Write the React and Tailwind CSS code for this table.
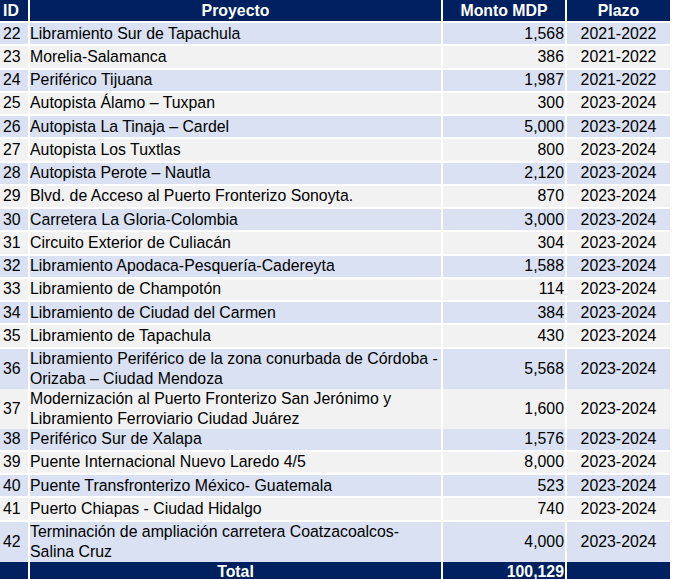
const ROWS = [
  { id: 22, name: ['Libramiento Sur de Tapachula'], monto: '1,568', plazo: '2021-2022' },
  { id: 23, name: ['Morelia-Salamanca'], monto: '386', plazo: '2021-2022' },
  { id: 24, name: ['Periférico Tijuana'], monto: '1,987', plazo: '2021-2022' },
  { id: 25, name: ['Autopista Álamo – Tuxpan'], monto: '300', plazo: '2023-2024' },
  { id: 26, name: ['Autopista La Tinaja – Cardel'], monto: '5,000', plazo: '2023-2024' },
  { id: 27, name: ['Autopista Los Tuxtlas'], monto: '800', plazo: '2023-2024' },
  { id: 28, name: ['Autopista Perote – Nautla'], monto: '2,120', plazo: '2023-2024' },
  { id: 29, name: ['Blvd. de Acceso al Puerto Fronterizo Sonoyta.'], monto: '870', plazo: '2023-2024' },
  { id: 30, name: ['Carretera La Gloria-Colombia'], monto: '3,000', plazo: '2023-2024' },
  { id: 31, name: ['Circuito Exterior de Culiacán'], monto: '304', plazo: '2023-2024' },
  { id: 32, name: ['Libramiento Apodaca-Pesquería-Cadereyta'], monto: '1,588', plazo: '2023-2024' },
  { id: 33, name: ['Libramiento de Champotón'], monto: '114', plazo: '2023-2024' },
  { id: 34, name: ['Libramiento de Ciudad del Carmen'], monto: '384', plazo: '2023-2024' },
  { id: 35, name: ['Libramiento de Tapachula'], monto: '430', plazo: '2023-2024' },
  { id: 36, name: ['Libramiento Periférico de la zona conurbada de Córdoba -', 'Orizaba – Ciudad Mendoza'], monto: '5,568', plazo: '2023-2024' },
  { id: 37, name: ['Modernización al Puerto Fronterizo San Jerónimo y', 'Libramiento Ferroviario Ciudad Juárez'], monto: '1,600', plazo: '2023-2024' },
  { id: 38, name: ['Periférico Sur de Xalapa'], monto: '1,576', plazo: '2023-2024' },
  { id: 39, name: ['Puente Internacional Nuevo Laredo 4/5'], monto: '8,000', plazo: '2023-2024' },
  { id: 40, name: ['Puente Transfronterizo México- Guatemala'], monto: '523', plazo: '2023-2024' },
  { id: 41, name: ['Puerto Chiapas - Ciudad Hidalgo'], monto: '740', plazo: '2023-2024' },
  { id: 42, name: ['Terminación de ampliación carretera Coatzacoalcos-', 'Salina Cruz'], monto: '4,000', plazo: '2023-2024' },
]

const COLS = 'grid grid-cols-[28px_411px_122px_103px] gap-x-[2px]'

function Row({ row, index }) {
  const bg = index % 2 === 0 ? 'bg-[#d9e1f2]' : 'bg-[#f2f2f2]'
  const h = row.name.length > 1 ? 'h-[38px]' : 'h-[21.25px]'
  return (
    <div className={`${COLS} ${h} text-black`}>
      <div className={`${bg} flex items-center pl-[3px]`}>{row.id}</div>
      <div className={`${bg} flex flex-col justify-center leading-[20px]`}>
        {row.name.map((line) => (
          <span key={line}>{line}</span>
        ))}
      </div>
      <div className={`${bg} flex items-center justify-end pr-[1px]`}>{row.monto}</div>
      <div className={`${bg} flex items-center justify-center`}>{row.plazo}</div>
    </div>
  )
}

export default function App() {
  return (
    <div className="w-[675px] h-[579px] overflow-hidden bg-white font-['Liberation_Sans',Arial,sans-serif] text-[15.85px] leading-[20px]">
      <div className="flex flex-col gap-y-[2px] w-[670px]">
        {/* Header */}
        <div className={`${COLS} h-[21px] font-bold text-white`}>
          <div className="bg-[#002060] flex items-center pl-[3px]">ID</div>
          <div className="bg-[#002060] flex items-center justify-center">Proyecto</div>
          <div className="bg-[#002060] flex items-center justify-center">Monto MDP</div>
          <div className="bg-[#002060] flex items-center justify-center">Plazo</div>
        </div>

        {ROWS.map((row, i) => (
          <Row key={row.id} row={row} index={i} />
        ))}

        {/* Total */}
        <div className={`${COLS} h-[21px] font-bold text-white`}>
          <div className="bg-[#002060]" />
          <div className="bg-[#002060] flex items-center justify-center">Total</div>
          <div className="bg-[#002060] flex items-center justify-end pr-[1px]">100,129</div>
          <div className="bg-[#002060]" />
        </div>
      </div>
    </div>
  )
}
